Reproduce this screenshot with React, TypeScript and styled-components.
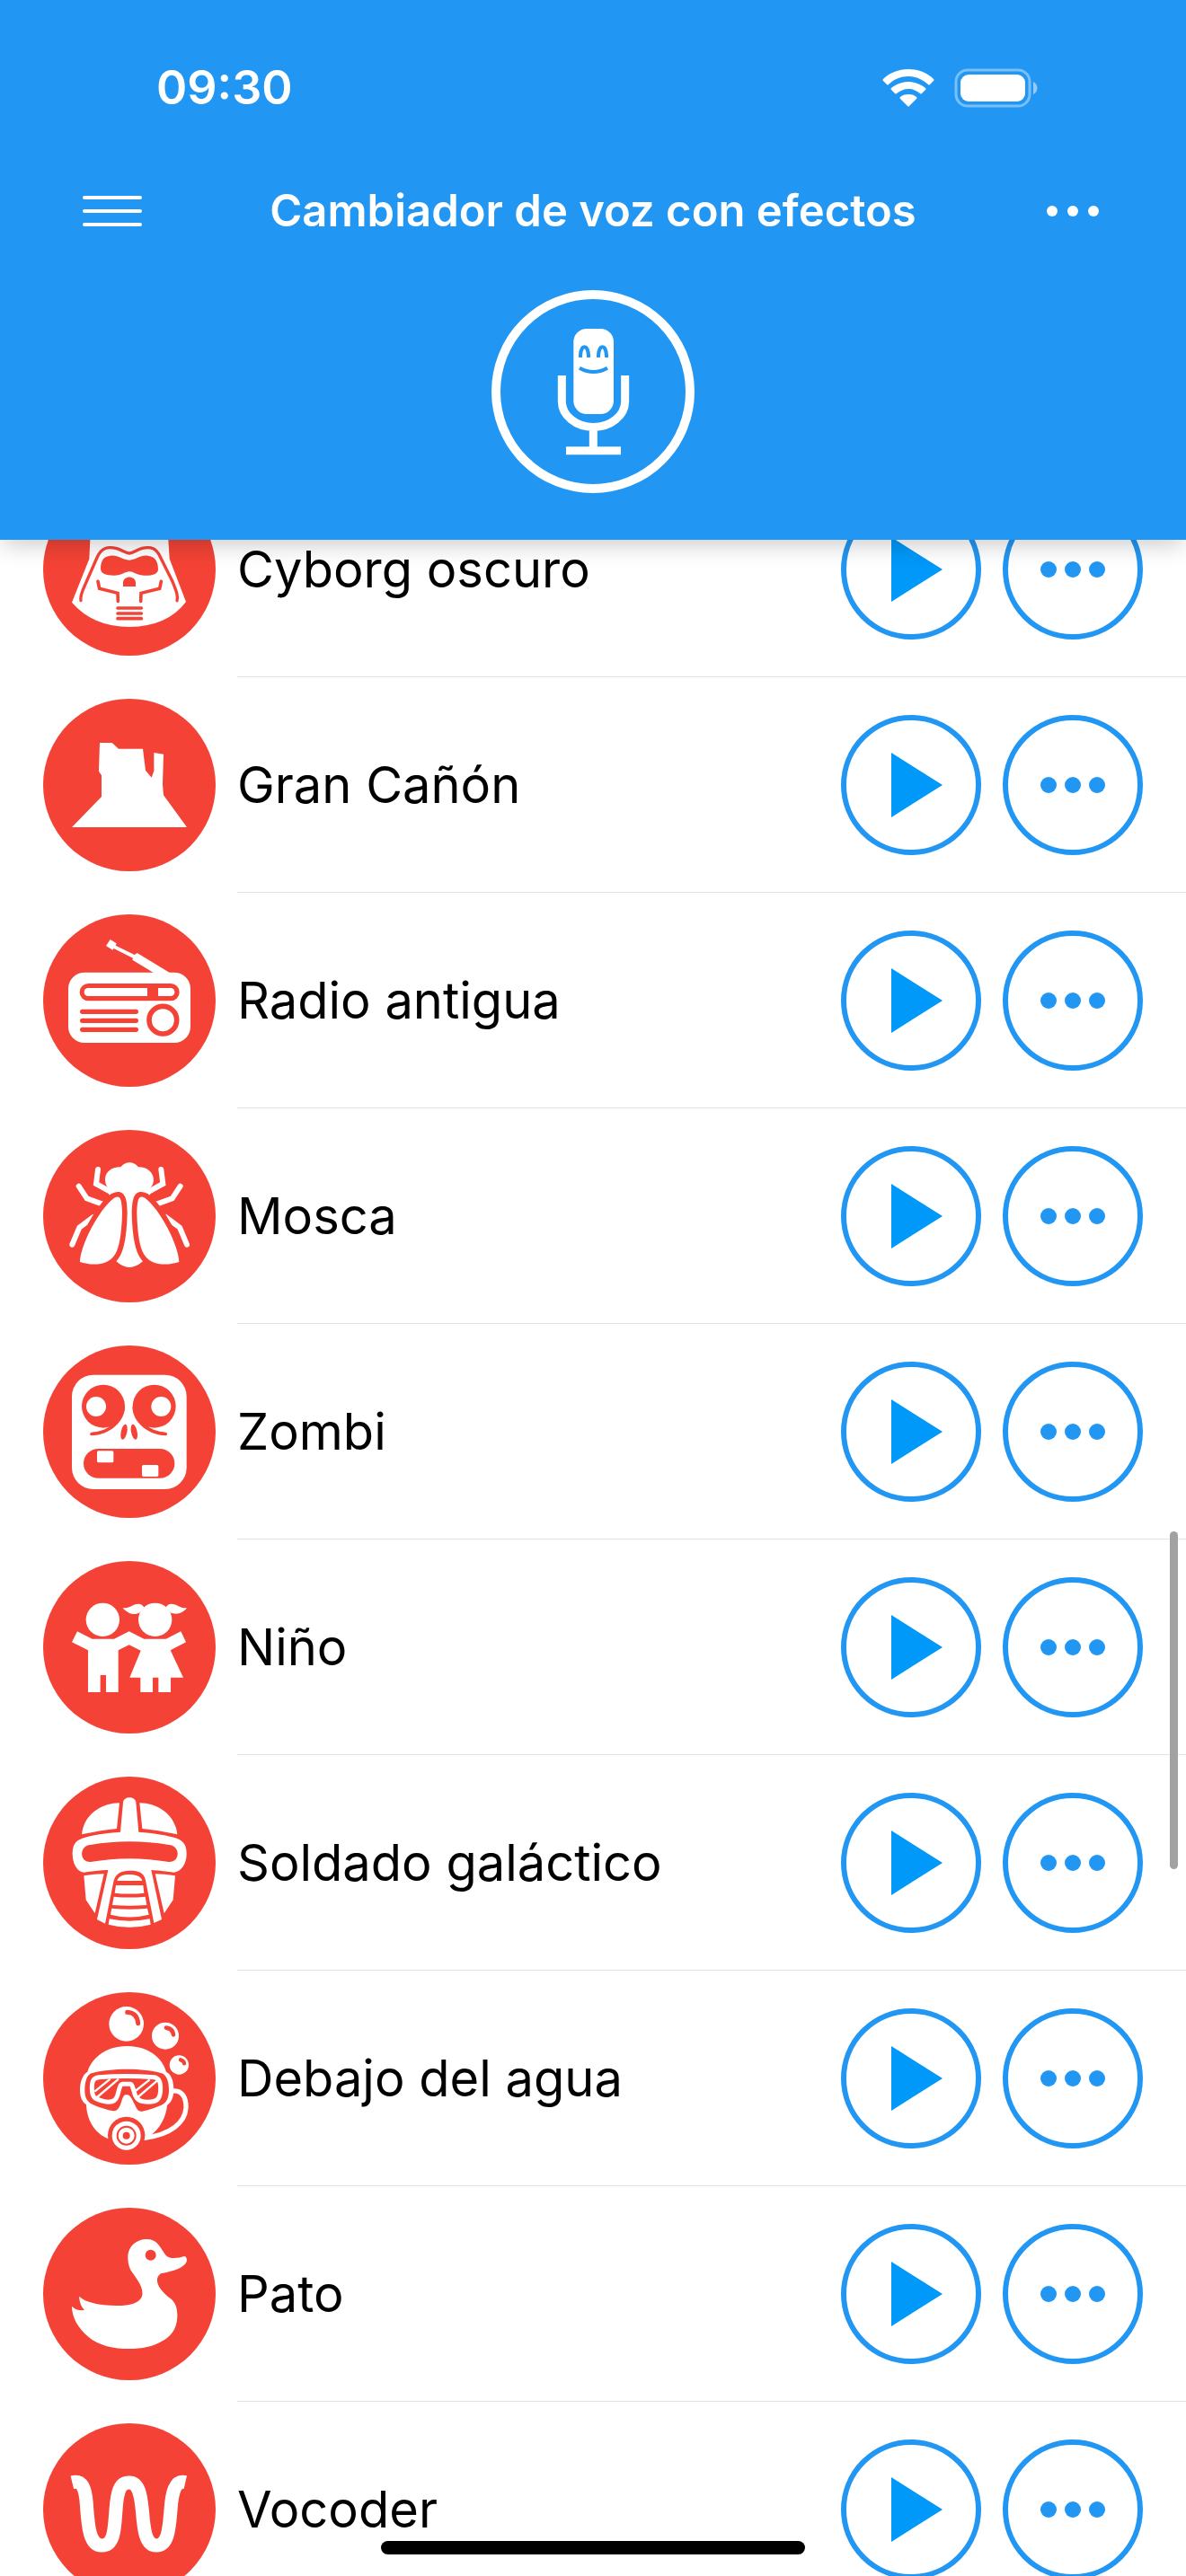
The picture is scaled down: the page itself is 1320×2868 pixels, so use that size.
import React, { useLayoutEffect, useRef } from "react";
import styled, { createGlobalStyle } from "styled-components";

const BLUE = "#2196f3";
const RED = "#f44336";

const GlobalStyle = createGlobalStyle`
  * { box-sizing: border-box; }
  body {
    margin: 0;
    background: #fff;
    font-family: Inter, "Liberation Sans", sans-serif;
  }
  button {
    padding: 0;
    border: 0;
    background: none;
    color: inherit;
    font: inherit;
    cursor: pointer;
  }
  svg { display: block; }
`;

const Screen = styled.div`
  position: relative;
  display: flex;
  flex-direction: column;
  height: 100vh;
  overflow: hidden;
`;

const Header = styled.header`
  position: relative;
  z-index: 1;
  flex: none;
  display: flex;
  flex-direction: column;
  padding-bottom: 52px;
  background: ${BLUE};
  color: #fff;
  box-shadow: 0 10px 24px -4px rgba(0, 0, 0, 0.2);
`;

const StatusBar = styled.div`
  display: flex;
  align-items: center;
  justify-content: space-between;
  height: 192px;
  padding: 4px 164px 0 174px;
`;

const Clock = styled.time`
  font-size: 52px;
  font-weight: 600;
  line-height: 64px;
`;

const StatusIcons = styled.div`
  display: flex;
  align-items: center;
  gap: 22px;
`;

const NavBar = styled.nav`
  display: grid;
  grid-template-columns: 1fr auto 1fr;
  align-items: center;
  height: 86px;
  padding: 0 92px;
`;

const NavButton = styled.button<{ $end?: boolean }>`
  justify-self: ${(p) => (p.$end ? "end" : "start")};
`;

const Title = styled.h1`
  margin: 0;
  font-size: 49px;
  font-weight: 600;
  line-height: 60px;
  white-space: nowrap;
`;

const MicButton = styled.button`
  align-self: center;
  margin-top: 45px;
`;

const ListArea = styled.main`
  position: relative;
  flex: 1;
  min-height: 0;
`;

const EffectList = styled.ul`
  height: 100%;
  margin: 0;
  padding: 0;
  overflow-y: auto;
  scrollbar-width: none;
  list-style: none;
`;

const Row = styled.li`
  display: flex;
  gap: 24px;
  height: 240px;
  padding-left: 48px;
`;

const Badge = styled.svg`
  flex: none;
  align-self: center;
  width: 192px;
  height: 192px;
  border-radius: 50%;
  background: ${RED};
`;

const RowBody = styled.div`
  flex: 1;
  display: flex;
  align-items: center;
  gap: 24px;
  padding-right: 48px;
  border-bottom: 1px solid #e2e2e2;
`;

const Name = styled.span`
  flex: 1;
  color: #000;
  font-size: 56px;
  line-height: 72px;
`;

const RoundButton = styled.button`
  display: grid;
  place-items: center;
  flex: none;
  width: 156px;
  height: 156px;
  border: 6px solid ${BLUE};
  border-radius: 50%;
`;

const ScrollThumb = styled.div`
  position: absolute;
  top: 1104px;
  right: 9px;
  width: 9px;
  height: 376px;
  border-radius: 5px;
  background: #a2a2a2;
`;

const HomeIndicator = styled.div`
  position: absolute;
  z-index: 2;
  bottom: 24px;
  left: 50%;
  width: 472px;
  height: 15px;
  border-radius: 8px;
  background: #000;
  transform: translateX(-50%);
`;

const Mirror = ({ children }: { children: React.ReactNode }) => (
  <>
    {children}
    <g transform="matrix(-1 0 0 1 685 0)">{children}</g>
  </>
);

const cyborg = (
  <>
    <path d="M211 33L208 97L150 242Q220 323 342 324Q470 322 531 240L476 97L472 33C470 -90 212 -90 211 33Z" fill="#fff" />
    <path d="M180 236C176 215 190 195 200 170L235 90C250 58 270 55 300 62C320 68 330 78 342 78C355 78 362 68 385 61C415 54 432 62 445 90L485 170C497 200 506 220 501 236" fill="none" stroke={RED} strokeWidth="10" strokeLinecap="round" />
    <path d="M246 130C246 105 255 87 280 86C305 84 320 101 342 101C362 101 378 84 402 86C428 88 438 105 438 132C438 148 415 154 390 152C365 150 355 139 342 139C328 139 318 152 290 152C265 152 246 146 246 130ZM321 189V176C322 151 362 151 363 176V189Z" fill={RED} />
    <path d="M237 172L242 196L303 211L304 238M448 172L443 196L381 211L380 238M303 261H382M303 279H382M303 296H382" fill="none" stroke={RED} strokeWidth="11" strokeLinecap="round" />
  </>
);

const canyon = (
  <path d="M243 711H284L306 731H387L396 803L416 827L424 805V744L456 749L453 850L456 886L534 993H150L249 891V820L240 806Z" fill="#fff" />
);

const radio = (
  <>
    <rect x="138" y="248" width="408" height="235" rx="54" fill="#fff" />
    <path d="M278 138L299 151L296 158L359 189L368 183L478 250H424L352 206L354 200L290 168L286 173L264 159Z" fill="#fff" />
    <rect x="176" y="285" width="333" height="58" rx="29" fill={RED} />
    <rect x="191" y="300" width="302" height="27" rx="13" fill="#fff" />
    <path d="M402 295H438V332H402Z" fill={RED} />
    <path d="M185 379H364M185 409H364M185 439H364" stroke={RED} strokeWidth="16" strokeLinecap="round" />
    <circle cx="454" cy="407" r="46" fill="none" stroke={RED} strokeWidth="17" />
  </>
);

const fly = (
  <>
    <Mirror>
      <path d="M237 186L231 234L278 260M173 242L200 283L252 302M151 437L175 380L222 345" fill="none" stroke="#fff" strokeWidth="18" strokeLinecap="round" />
    </Mirror>
    <path d="M273 248C262 240 261 225 261 218C262 193 285 177 313 178C330 158 355 158 372 178C400 177 422 195 423 220C423 232 419 241 411 248L414 265L390 300L387 493Q342 533 298 493L295 300L271 265Z" fill="#fff" />
    <Mirror>
      <path d="M305 278C315 280 317 300 318 330C317 380 312 430 300 458C280 510 215 508 177 495C178 440 240 320 290 282Q300 277 305 278Z" fill={RED} stroke={RED} strokeWidth="34" />
    </Mirror>
    <Mirror>
      <path d="M305 278C315 280 317 300 318 330C317 380 312 430 300 458C280 510 215 508 177 495C178 440 240 320 290 282Q300 277 305 278Z" fill="#fff" />
    </Mirror>
  </>
);

const zombie = (
  <>
    <rect x="150" y="152" width="383" height="382" rx="72" fill="#fff" />
    <circle cx="255" cy="257" r="72" fill={RED} />
    <circle cx="425" cy="257" r="72" fill={RED} />
    <path d="M327 257C327 310 275 352 216 355C209 354 209 345 216 344C240 343 262 335 275 325ZM352 257C352 310 404 352 463 355C470 354 470 345 463 344C440 343 418 335 405 325Z" fill={RED} />
    <circle cx="231" cy="258" r="33" fill="#fff" />
    <circle cx="448" cy="258" r="33" fill="#fff" />
    <ellipse cx="324" cy="343" rx="10" ry="26" transform="rotate(12 324 343)" fill={RED} />
    <ellipse cx="358" cy="343" rx="10" ry="26" transform="rotate(-12 358 343)" fill={RED} />
    <rect x="189" y="399" width="304" height="98" rx="49" fill={RED} />
    <rect x="234" y="406" width="55" height="39" rx="5" fill="#fff" />
    <rect x="384" y="453" width="55" height="39" rx="5" fill="#fff" />
  </>
);

const kids = (
  <g fill="#fff">
    <circle cx="253" cy="250" r="56" />
    <circle cx="428" cy="250" r="56" />
    <path d="M320 211C345 212 352 198 372 197C382 197 388 202 391 209L378 226C355 238 335 228 320 211ZM534 211C510 212 502 198 482 197C472 197 467 203 464 208L478 226C500 236 520 228 534 211Z" />
    <path d="M168 289L218 314H291L341 289L391 314H464L514 289L531 325L479 352L522 443H480V492H439V443H420V492H379V443H343L380 353L341 334L305 352V492H264V435H245V492H204V352L150 325Z" />
  </g>
);

const soldier = (
  <>
    <g fill="#fff">
      <Mirror>
        <path d="M309 142C240 142 188 190 183 247Q240 233 300 228ZM190 385Q225 379 257 379L227 511L197 466Z" />
      </Mirror>
      <path d="M312 239L321 140C323 118 362 118 364 140L373 239C420 242 470 250 500 260C525 270 533 285 533 312C533 345 515 372 490 374C470 371 440 368 415 366L450 531L424 543L396 400C390 372 370 368 342 368C315 368 295 378 289 405L261 545L234 531L271 366C245 367 215 370 190 374C165 372 152 340 152 312C152 285 160 268 185 260C215 249 265 242 312 239Z" />
      <path d="M301 402C305 386 322 381 342 381C365 381 382 388 385 402ZM297 417H388L391 443Q342 448 293 443ZM290 455Q342 460 395 455L400 483Q342 488 285 483ZM283 494Q342 500 402 494L407 515Q342 532 279 515ZM275 529Q342 543 410 529L413 548Q342 567 272 548Z" />
    </g>
    <path d="M212 282Q342 260 474 282C512 284 514 340 474 339Q342 316 212 339C174 340 174 284 212 282Z" fill={RED} />
  </>
);

const diver = (
  <>
    <g fill="#fff">
      <circle cx="332" cy="160" r="58" />
      <circle cx="462" cy="200" r="45" />
      <circle cx="508" cy="297" r="32" />
      <path d="M202 320C218 268 270 234 334 234C400 234 450 268 465 320C485 330 490 355 490 382C490 405 482 422 468 432C465 470 445 505 421 526L394 548L270 543C225 525 200 480 198 430C185 422 177 405 177 382C177 355 185 330 202 320Z" />
    </g>
    <path d="M486 384C520 380 532 410 531 440C528 490 480 530 392 541" fill="none" stroke="#fff" strokeWidth="16" />
    <g fill="none" stroke={RED} strokeLinecap="round">
      <path d="M335 121Q368 123 371 158" strokeWidth="15" />
      <path d="M465 173Q487 176 489 196" strokeWidth="14" />
      <path d="M513 280Q524 283 525 292" strokeWidth="13" />
    </g>
    <path d="M215 325C280 307 390 307 450 325C468 332 474 355 474 382C474 405 467 422 452 430C430 440 410 447 385 452C370 455 365 440 360 430C350 410 345 396 332 396C320 396 318 415 312 430C305 445 300 453 285 450C260 445 230 435 212 425C197 415 193 400 193 382C193 355 200 330 215 325Z" fill={RED} />
    <path d="M240 338C300 333 360 333 425 338C440 340 446 350 446 375C446 405 438 418 415 420C385 422 370 418 362 400C355 380 352 361 345 361H320C310 361 308 380 302 400C296 418 280 425 255 418C225 410 217 405 217 375C217 350 222 340 240 338Z" fill={RED} stroke="#fff" strokeWidth="15" />
    <path d="M226 386L278 344M234 405L306 344M362 384L410 346M370 405L438 347" stroke="#fff" strokeWidth="7" />
    <circle cx="332" cy="532" r="62" fill={RED} />
    <circle cx="332" cy="533" r="48" fill="#fff" />
    <circle cx="332" cy="533" r="30" fill="none" stroke={RED} strokeWidth="6" />
    <circle cx="332" cy="533" r="12" fill={RED} />
  </>
);

const duck = (
  <>
    <path d="M401 189C430 189 442 210 455 230C465 248 475 252 490 252C505 252 515 250 525 246C532 246 535 255 533 264C525 285 490 295 447 304C435 312 432 325 437 338C445 358 460 372 480 388C498 402 503 425 502 450C500 490 480 515 450 530C420 547 385 555 342 555C290 555 240 545 205 515C170 485 150 450 150 413C160 424 175 428 192 426C180 412 176 400 174 380C195 400 240 410 300 411C345 411 375 402 384 380C392 350 365 320 347 293C338 275 337 262 337 248C338 213 365 189 401 189Z" fill="#fff" />
    <circle cx="413" cy="242" r="18" fill={RED} />
  </>
);

const vocoder = (
  <path d="M97 197C130 189 141 215 145 270C150 345 155 408 196 408C240 408 238 345 243 290C247 230 255 198 287 198C320 198 326 240 331 290C336 350 340 408 378 408C418 408 421 350 426 290C430 230 440 189 475 197" fill="none" stroke="#fff" strokeWidth="45" />
);

const effects = [
  { name: "Cyborg oscuro", art: cyborg, box: "54 -156 576 576" },
  { name: "Gran Cañón", art: canyon, box: "54 564 576 576" },
  { name: "Radio antigua", art: radio, box: "54 54 576 576" },
  { name: "Mosca", art: fly, box: "54 54 576 576" },
  { name: "Zombi", art: zombie, box: "54 54 576 576" },
  { name: "Niño", art: kids, box: "54 54 576 576" },
  { name: "Soldado galáctico", art: soldier, box: "54 54 576 576" },
  { name: "Debajo del agua", art: diver, box: "54 54 576 576" },
  { name: "Pato", art: duck, box: "54 84 576 576" },
  { name: "Vocoder", art: vocoder, box: "0 0 576 576" },
];

const WifiIcon = () => (
  <svg width="58" height="42" viewBox="0 0 58 42" fill="#fff" aria-hidden="true">
    <path d="M29 0C40 0 50 4 57 11Q58 12 57 13L53 17Q52 18 51 17C45 11 37 8 29 8S13 11 7 17Q6 18 5 17L1 13Q0 12 1 11C8 4 18 0 29 0Z" />
    <path d="M29 14C36 14 43 17 48 21Q49 22 48 23L44 27Q43 28 42 27C38 24 34 22 29 22S20 24 16 27Q15 28 14 27L10 23Q9 22 10 21C15 17 22 14 29 14Z" />
    <path d="M29 28C33 28 36 29 38 31Q39 32 38 33L30 41Q29 42 28 41L20 33Q19 32 20 31C22 29 25 28 29 28Z" />
  </svg>
);

const BatteryIcon = () => (
  <svg width="94" height="44" viewBox="0 0 94 44" aria-hidden="true">
    <rect x="2" y="2" width="82" height="40" rx="13" fill="none" stroke="#fff" strokeOpacity="0.4" strokeWidth="3" />
    <rect x="7" y="7" width="72" height="30" rx="9" fill="#fff" />
    <path d="M88 15C94 18 94 26 88 29Z" fill="#fff" fillOpacity="0.5" />
  </svg>
);

const MicIcon = () => (
  <svg width="226" height="226" viewBox="51 39 678 678" fill="none" aria-hidden="true">
    <circle cx="390" cy="378" r="324" stroke="#fff" strokeWidth="30" />
    <rect x="325" y="168" width="134" height="285" rx="44" fill="#fff" />
    <path d="M348 264V257C350 219 373 219 375 257V264M408 264V257C410 219 433 219 435 257V264M345 299Q392 325 438 299" stroke={BLUE} strokeWidth="12" />
    <path d="M286 324V410A105 86 0 0 0 497 410V324M391 496V575M300 575H483" stroke="#fff" strokeWidth="27" />
  </svg>
);

export default function App() {
  const listRef = useRef<HTMLUListElement>(null);

  // The list opens already scrolled, with its first row partly under the header.
  useLayoutEffect(() => {
    if (listRef.current) listRef.current.scrollTop = 87;
  }, []);

  return (
    <>
      <GlobalStyle />
      <Screen>
        <Header>
          <StatusBar>
            <Clock>09:30</Clock>
            <StatusIcons>
              <WifiIcon />
              <BatteryIcon />
            </StatusIcons>
          </StatusBar>
          <NavBar>
            <NavButton aria-label="Menú">
              <svg width="66" height="36" viewBox="0 0 66 36" aria-hidden="true">
                <path d="M2 3H64M2 18H64M2 33H64" stroke="#fff" strokeWidth="4" strokeLinecap="round" />
              </svg>
            </NavButton>
            <Title>Cambiador de voz con efectos</Title>
            <NavButton $end aria-label="Más opciones">
              <svg width="64" height="36" viewBox="0 0 64 36" fill="#fff" aria-hidden="true">
                <circle cx="7" cy="18" r="6" />
                <circle cx="30" cy="18" r="6" />
                <circle cx="53" cy="18" r="6" />
              </svg>
            </NavButton>
          </NavBar>
          <MicButton aria-label="Grabar">
            <MicIcon />
          </MicButton>
        </Header>
        <ListArea>
          <EffectList ref={listRef}>
            {effects.map((effect) => (
              <Row key={effect.name}>
                <Badge viewBox={effect.box} aria-hidden="true">
                  {effect.art}
                </Badge>
                <RowBody>
                  <Name>{effect.name}</Name>
                  <RoundButton aria-label={`Reproducir ${effect.name}`}>
                    <svg width="72" height="72" viewBox="0 0 72 72" aria-hidden="true">
                      <path d="M14 0L71 36L14 72Z" fill="#0098f9" />
                    </svg>
                  </RoundButton>
                  <RoundButton aria-label={`Opciones de ${effect.name}`}>
                    <svg width="72" height="18" viewBox="0 0 72 18" fill={BLUE} aria-hidden="true">
                      <circle cx="9" cy="9" r="9" />
                      <circle cx="36" cy="9" r="9" />
                      <circle cx="63" cy="9" r="9" />
                    </svg>
                  </RoundButton>
                </RowBody>
              </Row>
            ))}
          </EffectList>
          <ScrollThumb />
        </ListArea>
        <HomeIndicator />
      </Screen>
    </>
  );
}
